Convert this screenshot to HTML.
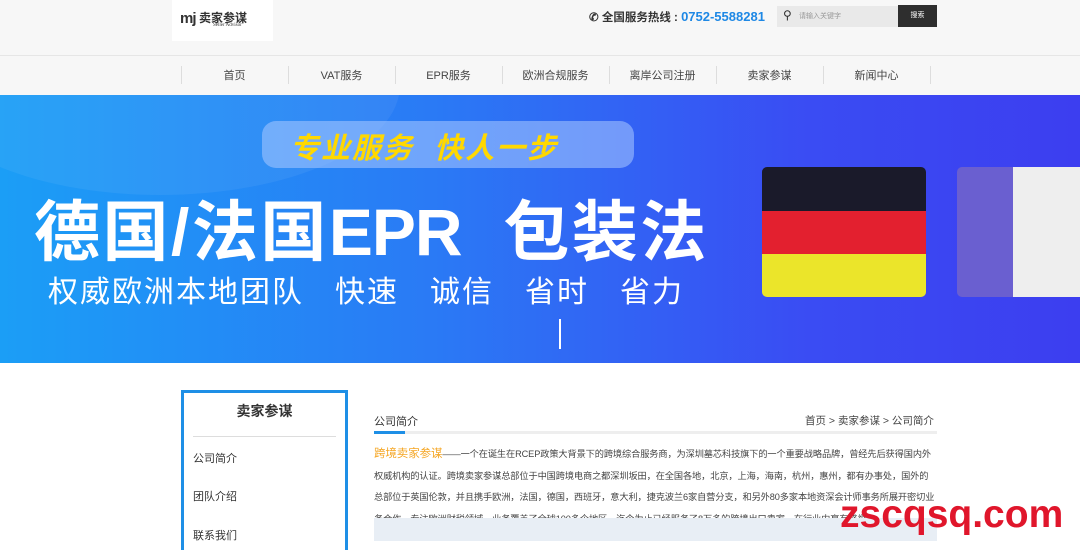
<!DOCTYPE html>
<html><head><meta charset="utf-8"><style>
*{margin:0;padding:0;box-sizing:border-box}
body{width:1080px;height:541px;overflow:hidden;background:#fff;font-family:"Liberation Sans","Noto Sans CJK SC",sans-serif;position:relative}
.a{position:absolute}
.head{left:0;top:0;width:1080px;height:56px;background:#f7f7f7;border-bottom:1px solid #e6e6e6}
.nav{left:0;top:56px;width:1080px;height:39px;background:#f7f7f7}
.nav span{position:absolute;top:11px;font-size:11px;color:#444;width:107px;text-align:center}
.nav i{position:absolute;top:10px;width:1px;height:18px;background:#ddd}
.banner{left:0;top:95px;width:1080px;height:268px;background:linear-gradient(90deg,#1b9ef6 0%,#2a7af5 40%,#3a4cf3 75%,#3c3ef0 100%);overflow:hidden}
</style></head><body>
<div class="a head"></div>
<div class="a" style="left:172px;top:0;width:101px;height:41px;background:#fff"></div>
<div class="a" style="left:180px;top:10px;font-size:15px;font-weight:bold;color:#333;letter-spacing:-1px">mj</div>
<div class="a" style="left:199px;top:9px;font-size:12px;font-weight:bold;color:#333">卖家参谋</div>
<div class="a" style="left:213px;top:23px;font-size:5px;color:#333;font-family:'Liberation Serif',serif">Seller Advisor</div>
<div class="a" style="left:589px;top:9px;font-size:11.5px;font-weight:bold;color:#333">✆ 全国服务热线 : <span style="color:#1e88e5;font-size:13px">0752-5588281</span></div>
<div class="a" style="left:777px;top:6px;width:121px;height:21px;background:#e9e9e9"></div>
<div class="a" style="left:783px;top:8px;font-size:12px;color:#333">⚲</div>
<div class="a" style="left:799px;top:11px;font-size:7px;color:#999">请输入关键字</div>
<div class="a" style="left:898px;top:5px;width:39px;height:22px;background:#2e2e2e;color:#fff;font-size:7px;text-align:center;line-height:22px">搜索</div>
<div class="a nav">
<i style="left:181px"></i><i style="left:288px"></i><i style="left:395px"></i><i style="left:502px"></i><i style="left:609px"></i><i style="left:716px"></i><i style="left:823px"></i><i style="left:930px"></i>
<span style="left:181px">首页</span><span style="left:288px">VAT服务</span><span style="left:395px">EPR服务</span><span style="left:502px">欧洲合规服务</span><span style="left:609px">离岸公司注册</span><span style="left:716px">卖家参谋</span><span style="left:823px">新闻中心</span>
</div>
<div class="a banner">
<div class="a" style="left:-80px;top:-120px;width:480px;height:220px;border-radius:50%;background:rgba(255,255,255,.06)"></div>
<div class="a" style="left:262px;top:26px;width:372px;height:47px;border-radius:14px;background:rgba(170,200,255,.55)"></div>
<div class="a" style="left:290px;top:30px;font-size:29px;font-weight:bold;font-style:italic;color:#ffd800;letter-spacing:2px">专业服务&nbsp;&nbsp;快人一步</div>
<div class="a" style="left:34px;top:84px;font-size:66px;font-weight:bold;color:#fff;white-space:nowrap;letter-spacing:2.5px">德国/法国<span style="letter-spacing:-1px">EPR</span>&nbsp;&nbsp;包装法</div>
<div class="a" style="left:48px;top:172px;font-size:30px;color:#fff;white-space:nowrap;letter-spacing:2px">权威欧洲本地团队&nbsp;&nbsp;&nbsp;快速&nbsp;&nbsp;&nbsp;诚信&nbsp;&nbsp;&nbsp;省时&nbsp;&nbsp;&nbsp;省力</div>
<div class="a" style="left:559px;top:224px;width:2px;height:30px;background:#fff"></div>
<div class="a" style="left:762px;top:72px;width:164px;height:130px;border-radius:5px;overflow:hidden;background:linear-gradient(#1a1a2a 0 34%,#e3202f 34% 67%,#ebe52a 67%)"></div>
<div class="a" style="left:957px;top:72px;width:140px;height:130px;border-radius:5px;overflow:hidden;background:linear-gradient(90deg,#6a5fd0 0 40%,#eee 40% 94%,#e33 94%)"></div>
</div>
<div class="a" style="left:181px;top:390px;width:167px;height:160px;border:3px solid #1e8fe6;border-bottom:none"></div>
<div class="a" style="left:181px;top:401px;width:167px;text-align:center;font-size:14px;font-weight:bold;color:#333">卖家参谋</div>
<div class="a" style="left:193px;top:436px;width:143px;height:1px;background:#ddd"></div>
<div class="a" style="left:193px;top:450px;font-size:11px;color:#333">公司简介</div>
<div class="a" style="left:193px;top:488px;font-size:11px;color:#333">团队介绍</div>
<div class="a" style="left:193px;top:527px;font-size:11px;color:#333">联系我们</div>
<div class="a" style="left:374px;top:413px;font-size:11px;color:#333">公司简介</div>
<div class="a" style="left:805px;top:413px;font-size:10.5px;color:#444">首页 &gt; 卖家参谋 &gt; 公司简介</div>
<div class="a" style="left:374px;top:431px;width:563px;height:3px;background:#eee"></div>
<div class="a" style="left:374px;top:431px;width:31px;height:3px;background:#1e8fe6"></div>
<div class="a" style="left:374px;top:444px;width:563px;font-size:9.2px;line-height:21.5px;color:#444;letter-spacing:-0.1px"><span style="color:#f5a623;font-size:11.5px">跨境卖家参谋</span>——一个在诞生在RCEP政策大背景下的跨境综合服务商，为深圳墓芯科技旗下的一个重要战略品牌，曾经先后获得国内外权威机构的认证。跨境卖家参谋总部位于中国跨境电商之都深圳坂田，在全国各地，北京，上海，海南，杭州，惠州，都有办事处，国外的总部位于英国伦敦，并且携手欧洲，法国，德国，西班牙，意大利，捷克波兰6家自营分支，和另外80多家本地资深会计师事务所展开密切业务合作。专注欧洲财税领域，业务覆盖了全球100多个地区。迄今为止已经服务了8万多的跨境出口卖家，在行业内享有盛誉。</div>
<div class="a" style="left:374px;top:518px;width:563px;height:23px;background:#e8eef5"></div>
<div class="a" style="left:840px;top:493px;font-size:39px;font-weight:bold;color:#e0162b">zscqsq.com</div>
</body></html>
